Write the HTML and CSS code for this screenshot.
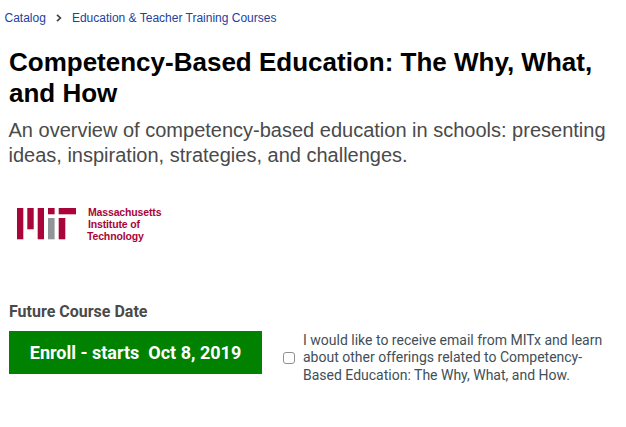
FILE: index.html
```html
<!DOCTYPE html>
<html lang="en">
<head>
  <meta charset="UTF-8">
  <meta name="viewport" content="width=device-width, initial-scale=1.0">
  <title>Competency-Based Education: The Why, What, and How</title>
  <link rel="stylesheet" href="styles.css">
</head>
<body>
<!--BREADCRUMB-->
  <nav class="breadcrumb">
    <a href="#">Catalog</a>
    <svg class="chevron" width="6" height="8" viewBox="0 0 6 8">
      <path d="M1 0.8 L4.4 4 L1 7.2" fill="none" stroke="#444" stroke-width="1.7"/>
    </svg>
    <a href="#">Education &amp; Teacher Training Courses</a>
  </nav>

<!--COURSE INTRO-->
  <main class="course">
    <h1>Competency-Based Education: The Why, What, and How</h1>
    <p class="subtitle">An overview of competency-based education in schools: presenting ideas, inspiration, strategies, and challenges.</p>

    <a href="#" class="school">
      <svg class="school-logo" width="59" height="32" viewBox="0 0 59 32">
        <g fill="#a9053a">
          <rect x="0" y="0" width="6.3" height="31.3"/>
          <rect x="10.3" y="0" width="6.4" height="21.3"/>
          <rect x="20.7" y="0" width="6.3" height="31.3"/>
          <rect x="31" y="0" width="6.6" height="6.3"/>
          <rect x="41.7" y="0" width="17.3" height="6.3"/>
          <rect x="41.7" y="10" width="6.6" height="21.3"/>
        </g>
        <rect x="31" y="10" width="6.6" height="21.3" fill="#929597"/>
      </svg>
      <span class="school-name">Massachusetts<br>Institute of<br><span class="last-line">Technology</span></span>
    </a>

<!--ENROLL-->
    <h2>Future Course Date</h2>
    <div class="enroll">
      <button class="enroll-button">Enroll - starts&nbsp; Oct 8, 2019</button>
      <label class="email-opt">
        <input type="checkbox">
        <span>I would like to receive email from MITx and learn about other offerings related to Competency-Based Education: The Why, What, and How.</span>
      </label>
    </div>
  </main>
</body>
</html>
```

FILE: styles.css
```css
body {
  margin: 0;
  background-color: white;
  font-family: "Liberation Sans", Arial, sans-serif;
}
.breadcrumb {
  display: flex;
  align-items: center;
  height: 36px;
  padding-left: 4.5px;
  font-size: 12px;
}
.breadcrumb a {
  color: #23419f;
  text-decoration: none;
}
.chevron {
  margin: 0 10px 1px;
}
.course {
  padding: 11px 9px 0;
}
h1 {
  margin: 0;
  font-size: 26px;
  line-height: 31px;
  color: black;
}
.subtitle {
  margin: 9px -1px 0 -0.5px;
  font-size: 20px;
  line-height: 25px;
  color: #4a4a4a;
}
.school {
  display: flex;
  margin-top: 40px;
  padding-left: 8px;
  height: 40px;
  text-decoration: none;
}
.school-name {
  margin: -2px 0 0 12px;
  font-size: 10.5px;
  font-weight: bold;
  letter-spacing: -0.15px;
  line-height: 12px;
  color: #a9053a;
}
.last-line {
  margin-left: -1px;
}
h2 {
  margin: 54px 0 0;
  font-family: Roboto, sans-serif;
  font-size: 16px;
  font-weight: bold;
  line-height: 20px;
  color: #4a4a4a;
}
.enroll {
  display: flex;
  align-items: flex-start;
  margin-top: 9px;
}
.enroll-button {
  width: 253px;
  height: 43px;
  padding: 0;
  border: none;
  background-color: #008100;
  font-family: Roboto, sans-serif;
  font-size: 18px;
  font-weight: bold;
  color: white;
  cursor: pointer;
}
.enroll-button:hover {
  opacity: 0.9;
}
.email-opt {
  display: flex;
  align-items: center;
  width: 325px;
  margin: 0.6px 0 0 21px;
  font-family: Roboto, sans-serif;
  font-size: 14px;
  line-height: 17.5px;
  color: #414f57;
}
.email-opt input {
  appearance: none;
  flex-shrink: 0;
  width: 12px;
  height: 12px;
  margin: 0 8px 0 0;
  border: 1px solid #8f8f8f;
  border-radius: 3px;
  background-color: white;
}
.email-opt input:checked {
  background-color: #008100;
}
```
